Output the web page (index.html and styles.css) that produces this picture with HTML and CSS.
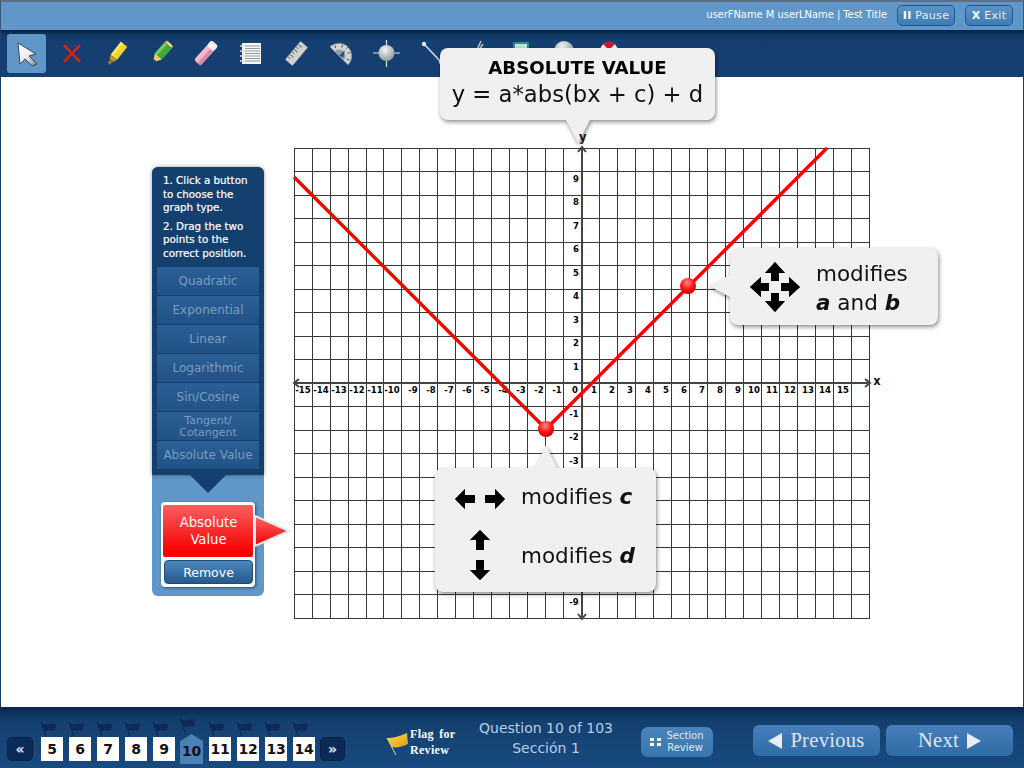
FILE: index.html
```html
<!DOCTYPE html>
<html lang="en">
<head>
<meta charset="utf-8">
<title>Absolute value graph question</title>
<link rel="stylesheet" href="styles.css">
</head>
<body>
<div class="page">
  <header class="topbar">
    <span class="user">userFName M userLName | Test Title</span>
    <button class="top-btn pause"><b>II</b> Pause</button>
    <button class="top-btn exit"><b>X</b> Exit</button>
  </header>

  <nav class="toolbar">
    <div class="tool active"><svg viewBox="0 0 39 39"><defs><linearGradient id="ga" x1="0" y1="0" x2="1" y2="1"><stop offset="0" stop-color="#fff"/><stop offset=".55" stop-color="#eee"/><stop offset="1" stop-color="#777"/></linearGradient></defs><polygon points="11,9 29,20 22,22 30,30 25,32 18,25 13,30" fill="url(#ga)" stroke="#35475c" stroke-width="1"/></svg></div>
    <div class="tool"><svg viewBox="0 0 39 39"><path d="M12 11 L28 28 M28 11 L12 28" stroke="#d0201a" stroke-width="2.6" fill="none"/></svg></div>
    <div class="tool"><svg viewBox="0 0 39 39"><g transform="translate(19.500 20) rotate(38) scale(.82) translate(-20 -19)"><rect x="15" y="4" width="10" height="20" rx="1" fill="#f4d530"/><rect x="15" y="4" width="3" height="20" fill="#fbe86a"/><polygon points="15,24 25,24 23,29 17,29" fill="#b8982a"/><rect x="18" y="29" width="4" height="5" fill="#8b7a30"/></g></svg></div>
    <div class="tool"><svg viewBox="0 0 39 39"><g transform="translate(19.500 19) rotate(42) scale(.78) translate(-19 -19)"><rect x="13" y="3" width="12" height="22" rx="2" fill="#3fa83a"/><rect x="13" y="3" width="4" height="22" fill="#7acb57"/><ellipse cx="19" cy="4" rx="6" ry="2" fill="#e8d9a0" stroke="#7a5a20" stroke-width=".8"/><polygon points="13,25 25,25 19,35" fill="#e6cf7a"/><polygon points="17,31.500 21,31.500 19,35" fill="#222"/></g></svg></div>
    <div class="tool"><svg viewBox="0 0 39 39"><g transform="translate(19 19) rotate(42) scale(.8) translate(-19.500 -17.500)"><rect x="14" y="1" width="11" height="33" rx="3" fill="#f6b8cd"/><rect x="20" y="1" width="5" height="33" rx="2" fill="#d98aa8"/><rect x="14" y="1" width="11" height="9" rx="3" fill="#f3f0f2"/></g></svg></div>
    <div class="tool"><svg viewBox="0 0 39 39"><rect x="10" y="9" width="19" height="21" fill="#f7f7f3"/><path d="M13 12H28M13 14.500H28M13 17H28M13 19.500H28M13 22H28M13 24.500H28M13 27H28" stroke="#8d9aa0" stroke-width="1"/><path d="M8 12H12M8 17H12M8 22H12M8 27H12" stroke="#d8dde0" stroke-width="1.400"/></svg></div>
    <div class="tool"><svg viewBox="0 0 39 39"><g transform="translate(19.500 19.500) rotate(40) scale(.8) translate(-19 -19)"><rect x="13" y="4" width="12" height="30" rx="1" fill="#cfd2d2" stroke="#777" stroke-width=".6"/><path d="M14 9H19M14 13H17M14 17H19M14 21H17M14 25H19M14 29H17" stroke="#333" stroke-width="1"/></g></svg></div>
    <div class="tool"><svg viewBox="0 0 39 39"><g transform="translate(17 22) rotate(45) scale(.8) translate(-19 -21)"><path d="M3 21 A16 16 0 0 1 35 21 Z" fill="#d2d4d0" stroke="#777" stroke-width=".6"/><path d="M11 21 A8 8 0 0 1 27 21 Z" fill="#8da0ac"/><path d="M19 21 L19 11 L24 18Z" fill="#2c4b8a"/><path d="M6 15 L9 17 M12 8 L14 11 M19 5 L19 8 M26 8 L24 11 M32 15 L29 17" stroke="#444" stroke-width="1"/></g></svg></div>
    <div class="tool"><svg viewBox="0 0 39 39"><defs><radialGradient id="gb" cx=".4" cy=".3" r=".8"><stop offset="0" stop-color="#f2f6f6"/><stop offset="1" stop-color="#7f8f92"/></radialGradient></defs><path d="M6 19H33M19.500 6V33" stroke="#dfe6ea" stroke-width="1.200"/><circle cx="19.500" cy="19" r="8" fill="url(#gb)"/></svg></div>
    <div class="tool"><svg viewBox="0 0 39 39"><path d="M12 10 L29 28" stroke="#d4dde2" stroke-width="1.600"/><circle cx="12" cy="10" r="2.200" fill="#dfe6ea"/><circle cx="29" cy="28" r="2.200" fill="#dfe6ea"/></svg></div>
    <div class="tool"><svg viewBox="0 0 39 39"><path d="M19 18 L24 7 M22 16 L26 10" stroke="#b8c0c0" stroke-width="1.600"/></svg></div>
    <div class="tool"><svg viewBox="0 0 39 39"><rect x="11" y="8" width="16" height="24" rx="1" fill="#2f8c8a"/><rect x="13" y="10" width="12" height="5" fill="#bfe5d5"/></svg></div>
    <div class="tool"><svg viewBox="0 0 39 39"><circle cx="17" cy="17" r="10" fill="url(#gb)"/></svg></div>
    <div class="tool"><svg viewBox="0 0 39 39"><circle cx="17" cy="17" r="9" fill="#f2f2f2"/><path d="M11 10 A9 9 0 0 1 23 10 L17 16Z" fill="#d5152a"/></svg></div>
  </nav>

  <main class="stage">
    <aside class="panel">
      <div class="panel-dark">
        <p>1. Click a button to choose the graph type.</p>
        <p>2. Drag the two points to the correct position.</p>
        <div class="type-list">
          <div class="type">Quadratic</div>
          <div class="type">Exponential</div>
          <div class="type">Linear</div>
          <div class="type">Logarithmic</div>
          <div class="type">Sin/Cosine</div>
          <div class="type small">Tangent/<br>Cotangent</div>
          <div class="type">Absolute Value</div>
        </div>
      </div>
      <div class="chosen">
        <div class="chosen-name">Absolute<br>Value</div>
        <div class="remove">Remove</div>
        <svg class="chosen-tip" viewBox="0 0 38 36"><defs><linearGradient id="gr" x1="0" y1="0" x2="0" y2="1"><stop offset="0" stop-color="#f66"/><stop offset="1" stop-color="#e00"/></linearGradient></defs><polygon points="1,3 35,18 1,33" fill="url(#gr)" stroke="#e8e8e8" stroke-width="2"/></svg>
      </div>
    </aside>

    <svg class="graph" viewBox="290 130 600 500" width="600" height="500">
      <defs><radialGradient id="gp" cx=".45" cy=".3" r=".75"><stop offset="0" stop-color="#ff8a8a"/><stop offset=".55" stop-color="#f11"/><stop offset="1" stop-color="#b00"/></radialGradient></defs>
      <path class="grid" d="M294.500 148V619M312.500 148V619M330.500 148V619M348.500 148V619M366.500 148V619M383.500 148V619M401.500 148V619M419.500 148V619M437.500 148V619M455.500 148V619M473.500 148V619M491.500 148V619M509.500 148V619M527.500 148V619M545.500 148V619M563.500 148V619M599.500 148V619M617.500 148V619M635.500 148V619M653.500 148V619M671.500 148V619M689.500 148V619M707.500 148V619M725.500 148V619M743.500 148V619M761.500 148V619M779.500 148V619M797.500 148V619M815.500 148V619M833.500 148V619M851.500 148V619M869.500 148V619"/>
      <path class="grid" d="M294 148.500H870M294 171.500H870M294 195.500H870M294 218.500H870M294 242.500H870M294 265.500H870M294 289.500H870M294 312.500H870M294 336.500H870M294 359.500H870M294 406.500H870M294 430.500H870M294 453.500H870M294 477.500H870M294 500.500H870M294 524.500H870M294 547.500H870M294 571.500H870M294 594.500H870M294 618.500H870"/>
      <path class="axis" d="M295 383H868M582 149V617"/>
      <path class="axis-head" d="M299 379L294 383L299 387M865 379L870 383L865 387M578 152L582 147L586 152M578 614L582 619L586 614"/>
      <text class="tick" x="303" y="393">-15</text><text class="tick" x="321" y="393">-14</text><text class="tick" x="339" y="393">-13</text><text class="tick" x="357" y="393">-12</text><text class="tick" x="375" y="393">-11</text><text class="tick" x="392" y="393">-10</text><text class="tick" x="413" y="393">-9</text><text class="tick" x="431" y="393">-8</text><text class="tick" x="449" y="393">-7</text><text class="tick" x="467" y="393">-6</text><text class="tick" x="485" y="393">-5</text><text class="tick" x="503" y="393">-4</text><text class="tick" x="521" y="393">-3</text><text class="tick" x="539" y="393">-2</text><text class="tick" x="557" y="393">-1</text><text class="tick" x="575" y="393">0</text>
      <text class="tick" x="594" y="393">1</text><text class="tick" x="612" y="393">2</text><text class="tick" x="630" y="393">3</text><text class="tick" x="648" y="393">4</text><text class="tick" x="666" y="393">5</text><text class="tick" x="684" y="393">6</text><text class="tick" x="702" y="393">7</text><text class="tick" x="720" y="393">8</text><text class="tick" x="738" y="393">9</text><text class="tick" x="754" y="393">10</text><text class="tick" x="772" y="393">11</text><text class="tick" x="790" y="393">12</text><text class="tick" x="808" y="393">13</text><text class="tick" x="825" y="393">14</text><text class="tick" x="843" y="393">15</text>
      <text class="tick" x="576" y="182">9</text><text class="tick" x="576" y="205">8</text><text class="tick" x="576" y="229">7</text><text class="tick" x="576" y="252">6</text><text class="tick" x="576" y="276">5</text><text class="tick" x="576" y="299">4</text><text class="tick" x="576" y="323">3</text><text class="tick" x="576" y="346">2</text><text class="tick" x="576" y="370">1</text>
      <text class="tick" x="574" y="417">-1</text><text class="tick" x="574" y="440">-2</text><text class="tick" x="574" y="464">-3</text><text class="tick" x="574" y="605">-9</text>
      <text class="axis-name" x="877" y="385">x</text>
      <polyline class="curve" points="294,177 546,429 827,148"/>
      <circle class="handle" cx="546" cy="429" r="8"/><circle class="handle" cx="688" cy="286" r="8"/>
    </svg>
  </main>

  <div class="bubble bubble-formula">
    <strong>ABSOLUTE VALUE</strong>
    <span>y = a*abs(bx + c) + d</span>
  </div>
  <span class="y-label">y</span>

  <div class="bubble bubble-ab">
    <svg class="move" viewBox="0 0 50 50"><g class="arw"><polygon points="25,0 35,11 29,11 29,19 21,19 21,11 15,11"/><polygon points="25,50 35,39 29,39 29,31 21,31 21,39 15,39"/><polygon points="0,25 11,15 11,21 19,21 19,29 11,29 11,35"/><polygon points="50,25 39,15 39,21 31,21 31,29 39,29 39,35"/></g></svg>
    <div class="ab-text">modifies<br><b><i>a</i></b> and <b><i>b</i></b></div>
  </div>

  <div class="bubble bubble-cd">
    <div class="cd-row">
      <svg class="lr" viewBox="0 0 50 20"><g class="arw"><polygon points="0,10 10,0 10,6 20,6 20,14 10,14 10,20"/><polygon points="50,10 40,0 40,6 30,6 30,14 40,14 40,20"/></g></svg>
      <span>modifies <b><i>c</i></b></span>
    </div>
    <div class="cd-row">
      <svg class="ud" viewBox="0 0 50 50"><g class="arw"><polygon points="25,0 35,10 29,10 29,20 21,20 21,10 15,10"/><polygon points="25,50 35,40 29,40 29,30 21,30 21,40 15,40"/></g></svg>
      <span>modifies <b><i>d</i></b></span>
    </div>
  </div>

  <footer class="footer">
    <div class="qnav">
      <div class="page-btn">«</div>
      <div class="q"><svg class="flag" viewBox="0 0 22 14"><path d="M0 0L5 14" class="pole"/><path d="M1 1C6 4 10 0 15 2L14 9C10 7 7 10 3 8Z"/></svg><div class="num">5</div></div>
      <div class="q"><svg class="flag" viewBox="0 0 22 14"><path d="M0 0L5 14" class="pole"/><path d="M1 1C6 4 10 0 15 2L14 9C10 7 7 10 3 8Z"/></svg><div class="num">6</div></div>
      <div class="q"><svg class="flag" viewBox="0 0 22 14"><path d="M0 0L5 14" class="pole"/><path d="M1 1C6 4 10 0 15 2L14 9C10 7 7 10 3 8Z"/></svg><div class="num">7</div></div>
      <div class="q"><svg class="flag" viewBox="0 0 22 14"><path d="M0 0L5 14" class="pole"/><path d="M1 1C6 4 10 0 15 2L14 9C10 7 7 10 3 8Z"/></svg><div class="num">8</div></div>
      <div class="q"><svg class="flag" viewBox="0 0 22 14"><path d="M0 0L5 14" class="pole"/><path d="M1 1C6 4 10 0 15 2L14 9C10 7 7 10 3 8Z"/></svg><div class="num">9</div></div>
      <div class="q current"><svg class="flag" viewBox="0 0 22 14"><path d="M0 0L5 14" class="pole"/><path d="M1 1C6 4 10 0 15 2L14 9C10 7 7 10 3 8Z"/></svg><div class="num">10</div></div>
      <div class="q"><svg class="flag" viewBox="0 0 22 14"><path d="M0 0L5 14" class="pole"/><path d="M1 1C6 4 10 0 15 2L14 9C10 7 7 10 3 8Z"/></svg><div class="num">11</div></div>
      <div class="q"><svg class="flag" viewBox="0 0 22 14"><path d="M0 0L5 14" class="pole"/><path d="M1 1C6 4 10 0 15 2L14 9C10 7 7 10 3 8Z"/></svg><div class="num">12</div></div>
      <div class="q"><svg class="flag" viewBox="0 0 22 14"><path d="M0 0L5 14" class="pole"/><path d="M1 1C6 4 10 0 15 2L14 9C10 7 7 10 3 8Z"/></svg><div class="num">13</div></div>
      <div class="q"><svg class="flag" viewBox="0 0 22 14"><path d="M0 0L5 14" class="pole"/><path d="M1 1C6 4 10 0 15 2L14 9C10 7 7 10 3 8Z"/></svg><div class="num">14</div></div>
      <div class="page-btn next-page">»</div>
    </div>

    <div class="review-flag">
      <svg viewBox="0 0 24 24" class="gold"><defs><linearGradient id="gy" x1="0" y1="0" x2="1" y2="1"><stop offset="0" stop-color="#ffe14d"/><stop offset="1" stop-color="#d99a10"/></linearGradient></defs><path d="M2 6L11 23" stroke="#d8d8c8" stroke-width="1"/><path d="M2 6C8 6 13 5 22 1L23 12C17 15 11 16 7 15Z" fill="url(#gy)"/></svg>
      <span>Flag for<br>Review</span>
    </div>

    <div class="progress">Question 10 of 103<br>Sección 1</div>

    <div class="section-review">
      <svg viewBox="0 0 12 10" class="dots"><path d="M0 1H4V4H0ZM7 1H11V4H7ZM0 6H4V9H0ZM7 6H11V9H7Z"/></svg>
      <span>Section<br>Review</span>
    </div>

    <div class="nav-btn prev"><svg viewBox="0 0 14 16"><polygon points="0,8 14,0 14,16"/></svg>Previous</div>
    <div class="nav-btn next">Next<svg viewBox="0 0 14 16"><polygon points="14,8 0,0 0,16"/></svg></div>
  </footer>
</div>
</body>
</html>
```

FILE: styles.css
```css
* { box-sizing: border-box; }
html, body { margin: 0; padding: 0; background: #fff; }
body { font-family: "DejaVu Sans", Verdana, sans-serif; overflow: hidden; }
.page { position: relative; width: 1024px; height: 768px; overflow: hidden; }

/* Top bar */
.topbar {
  height: 30px; display: flex; align-items: center; justify-content: flex-end;
  padding: 0 10px 0 0; gap: 10px;
  background: #6096c8; border-top: 2px solid #5c6f82; border-right: 1px solid #33597f; border-left: 1px solid #33597f;
}
.user { font-family: "DejaVu Sans Condensed", "DejaVu Sans", sans-serif; font-size: 11px; color: #fff; white-space: nowrap; margin-top: -3px; }
.top-btn {
  height: 21px; padding: 0; font: 11px "DejaVu Sans", sans-serif; letter-spacing: .3px; color: #e8f0f8;
  background: linear-gradient(#5b93c8, #3f7bb4); border: 1px solid #1c5a96; border-radius: 5px;
  margin-top: -1px;
}
.top-btn b { color: #fff; }
.pause { width: 58px; }
.exit { width: 48px; }

/* Toolbar */
.toolbar {
  height: 47px; display: flex; gap: 6px; padding: 4px 0 0 7px;
  background: linear-gradient(#05213f 0, #113a68 5px, #143f70 12px);
  border-left: 1px solid #14406f;
}
.tool { width: 39px; height: 39px; border-radius: 3px; flex: none; }
.tool svg { display: block; width: 39px; height: 39px; }
.tool.active { background: #6096c8; margin-left: -1px; }

/* Stage */
.stage {
  height: 630px; display: flex; gap: 26px; align-items: flex-start;
  padding-left: 151px; background: #fff;
  border-left: 1px solid #14406f; border-right: 1px solid #14406f;
}
.panel {
  width: 112px; height: 429px; margin-top: 90px; flex: none;
  background: #6096c8; border-radius: 6px;
}
.panel-dark {
  position: relative; height: 308px; padding: 7px 5px 0;
  background: #14406f; border-radius: 6px 6px 0 0;
  box-shadow: 0 0 4px rgba(0, 0, 0, .4);
  color: #fff; font-size: 10.300px; line-height: 13.500px;
}
.panel-dark::after {
  content: ""; position: absolute; left: 38px; top: 100%;
  border-left: 18px solid transparent; border-right: 18px solid transparent; border-top: 18px solid #14406f;
}
.panel-dark p { margin: 0 6px 5px; -webkit-text-stroke: .2px #fff; }
.type-list { margin-top: 7px; }
.type {
  height: 28px; margin-bottom: 1px; padding-top: 2px; display: flex; align-items: center; justify-content: center; text-align: center;
  background: linear-gradient(#2b5f95, #225287); color: #7a9cc0; font-size: 12px;
}
.type.small { font-size: 11px; line-height: 12px; }

.chosen {
  position: relative; width: 94px; height: 85px; margin: 27px 0 0 9px; padding: 3px 2px;
  background: #fff; border-radius: 4px; box-shadow: 1px 1px 3px rgba(0, 0, 0, .5);
}
.chosen-name {
  height: 52px; display: flex; align-items: center; justify-content: center; text-align: center; padding-left: 1px;
  background: linear-gradient(#f86060, #fa0000 90%); color: #fff; font-size: 13.200px; line-height: 17px; border-radius: 2px;
}
.remove {
  width: 89px; height: 24px; margin: 3px 0 0 1px; display: flex; align-items: center; justify-content: center;
  background: linear-gradient(#4c88bd, #23598f); border: 1px solid #1c4a78; border-radius: 4px; color: #fff; font-size: 12.500px;
}
.chosen-tip { position: absolute; left: 93px; top: 11px; width: 38px; height: 36px; }

/* Graph */
.graph { flex: none; margin-top: 53px; display: block; }
.grid { stroke: #383838; stroke-width: 1; fill: none; }
.axis { stroke: #444; stroke-width: 2; fill: none; }
.axis-head { stroke: #444; stroke-width: 2; fill: none; }
.tick { font: bold 8.500px "DejaVu Sans", sans-serif; text-anchor: middle; fill: #000; }
.axis-name { font: bold 11.500px "DejaVu Sans", sans-serif; text-anchor: middle; fill: #111; }
.curve { fill: none; stroke: #f00; stroke-width: 3.400; }
.handle { fill: url(#gp); }

/* Callouts */
.bubble {
  position: absolute; background: #f0f0f0; border-radius: 8px; color: #111;
  filter: drop-shadow(1px 2px 2px rgba(0, 0, 0, .45));
}
.bubble::after { content: ""; position: absolute; }
.bubble-formula {
  left: 440px; top: 48px; width: 275px; height: 72px; z-index: 3;
  display: flex; flex-direction: column; align-items: center; padding-top: 8px;
}
.bubble-formula strong { font-size: 18.200px; line-height: 24px; color: #000; }
.bubble-formula span { font-size: 22.700px; line-height: 28px; }
.bubble-formula::after {
  left: 126px; top: 100%;
  border-left: 12px solid transparent; border-right: 12px solid transparent; border-top: 23px solid #f0f0f0;
}
.y-label { position: absolute; left: 579px; top: 130px; z-index: 4; font-size: 11.500px; font-weight: bold; color: #111; }
.bubble-ab {
  left: 730px; top: 248px; width: 208px; height: 77px; z-index: 3;
  display: flex; align-items: center; padding-left: 20px; gap: 16px;
}
.bubble-ab::after {
  right: 100%; top: 27px;
  border-top: 11px solid transparent; border-bottom: 11px solid transparent; border-right: 21px solid #f0f0f0;
}
.move { width: 50px; height: 50px; flex: none; }
.arw { fill: #000; filter: drop-shadow(0 0 .6px #222); }
.ab-text { font-size: 21.500px; line-height: 29px; margin-top: 2px; }
.bubble-cd {
  left: 435px; top: 468px; width: 221px; height: 124px; z-index: 3;
  display: flex; flex-direction: column; padding: 9px 0 0 20px;
}
.bubble-cd::after {
  left: 100px; bottom: 100%;
  border-left: 11px solid transparent; border-right: 11px solid transparent; border-bottom: 23px solid #f0f0f0;
}
.cd-row { display: flex; align-items: center; font-size: 21.500px; }
.cd-row:first-child { height: 38px; }
.cd-row:last-child { height: 58px; margin-top: 11px; }
.cd-row span { white-space: nowrap; }
.lr { width: 50px; height: 20px; margin-right: 16px; flex: none; margin-top: 6px; }
.ud { width: 50px; height: 50px; margin-right: 16px; flex: none; }

/* Footer */
.footer {
  height: 61px; display: flex; align-items: flex-start; padding-left: 7px;
  background: linear-gradient(#07264a 0, #113a68 10px, #14406f 16px, #184a80 100%);
}
.qnav { display: flex; align-items: flex-start; gap: 6px; margin-top: 11px; }
.page-btn {
  width: 26px; height: 24px; margin-top: 19px; margin-right: 2px; border-radius: 5px;
  background: #0b2a58; border: 1px solid #072041; color: #e4eef8; font-size: 14px; font-weight: bold;
  display: flex; align-items: center; justify-content: center;
}
.next-page { margin-right: 0; margin-left: -1px; width: 25px; }
.q { width: 22px; padding-top: 4px; flex: none; }
.flag { display: block; width: 22px; height: 14px; margin-bottom: 1px; fill: #0e2a58; overflow: visible; }
.pole { stroke: #0e2a58; stroke-width: 1.200; }
.num {
  height: 24px; background: #fff; color: #111; font-weight: bold; font-size: 14px;
  display: flex; align-items: center; justify-content: center; letter-spacing: -.3px;
}
.q.current { width: 23px; padding-top: 0; margin-left: -1px; }
.q.current .flag { margin-bottom: 2px; }
.q.current .num {
  height: 30px; padding-top: 4px; background: #4a82b8; clip-path: polygon(50% 0, 100% 24%, 100% 100%, 0 100%, 0 24%);
}
.review-flag { display: flex; align-items: center; margin: 19px 0 0 40px; width: 68px; gap: 1px; }
.gold { width: 24px; height: 24px; flex: none; margin-top: 3px; }
.review-flag span { font: bold 12px/16px "Liberation Serif", serif; color: #fff; white-space: nowrap; letter-spacing: .3px; word-spacing: 2px; }
.progress { width: 136px; margin: 11px 0 0 25px; text-align: center; color: #b8cee4; font-size: 14px; line-height: 20px; }
.section-review {
  width: 72px; height: 30px; margin: 20px 0 0 27px; border-radius: 7px;
  display: flex; align-items: center; justify-content: center; gap: 4px;
  background: linear-gradient(#4a84bb, #3a75ad); color: #dfeaf4; font-size: 10px; line-height: 12px; text-align: center;
}
.dots { width: 12px; height: 10px; fill: #fff; }
.nav-btn {
  width: 127px; height: 31px; margin: 18px 0 0 40px; border-radius: 6px;
  display: flex; align-items: center; justify-content: center; gap: 8px;
  background: linear-gradient(#477fba, #2f6ba6); color: #dfe8f2;
  font: 20.500px "Liberation Serif", serif; letter-spacing: .3px;
}
.nav-btn.next { margin-left: 6px; }
.nav-btn svg { width: 14px; height: 16px; fill: #e8eef2; }
```
